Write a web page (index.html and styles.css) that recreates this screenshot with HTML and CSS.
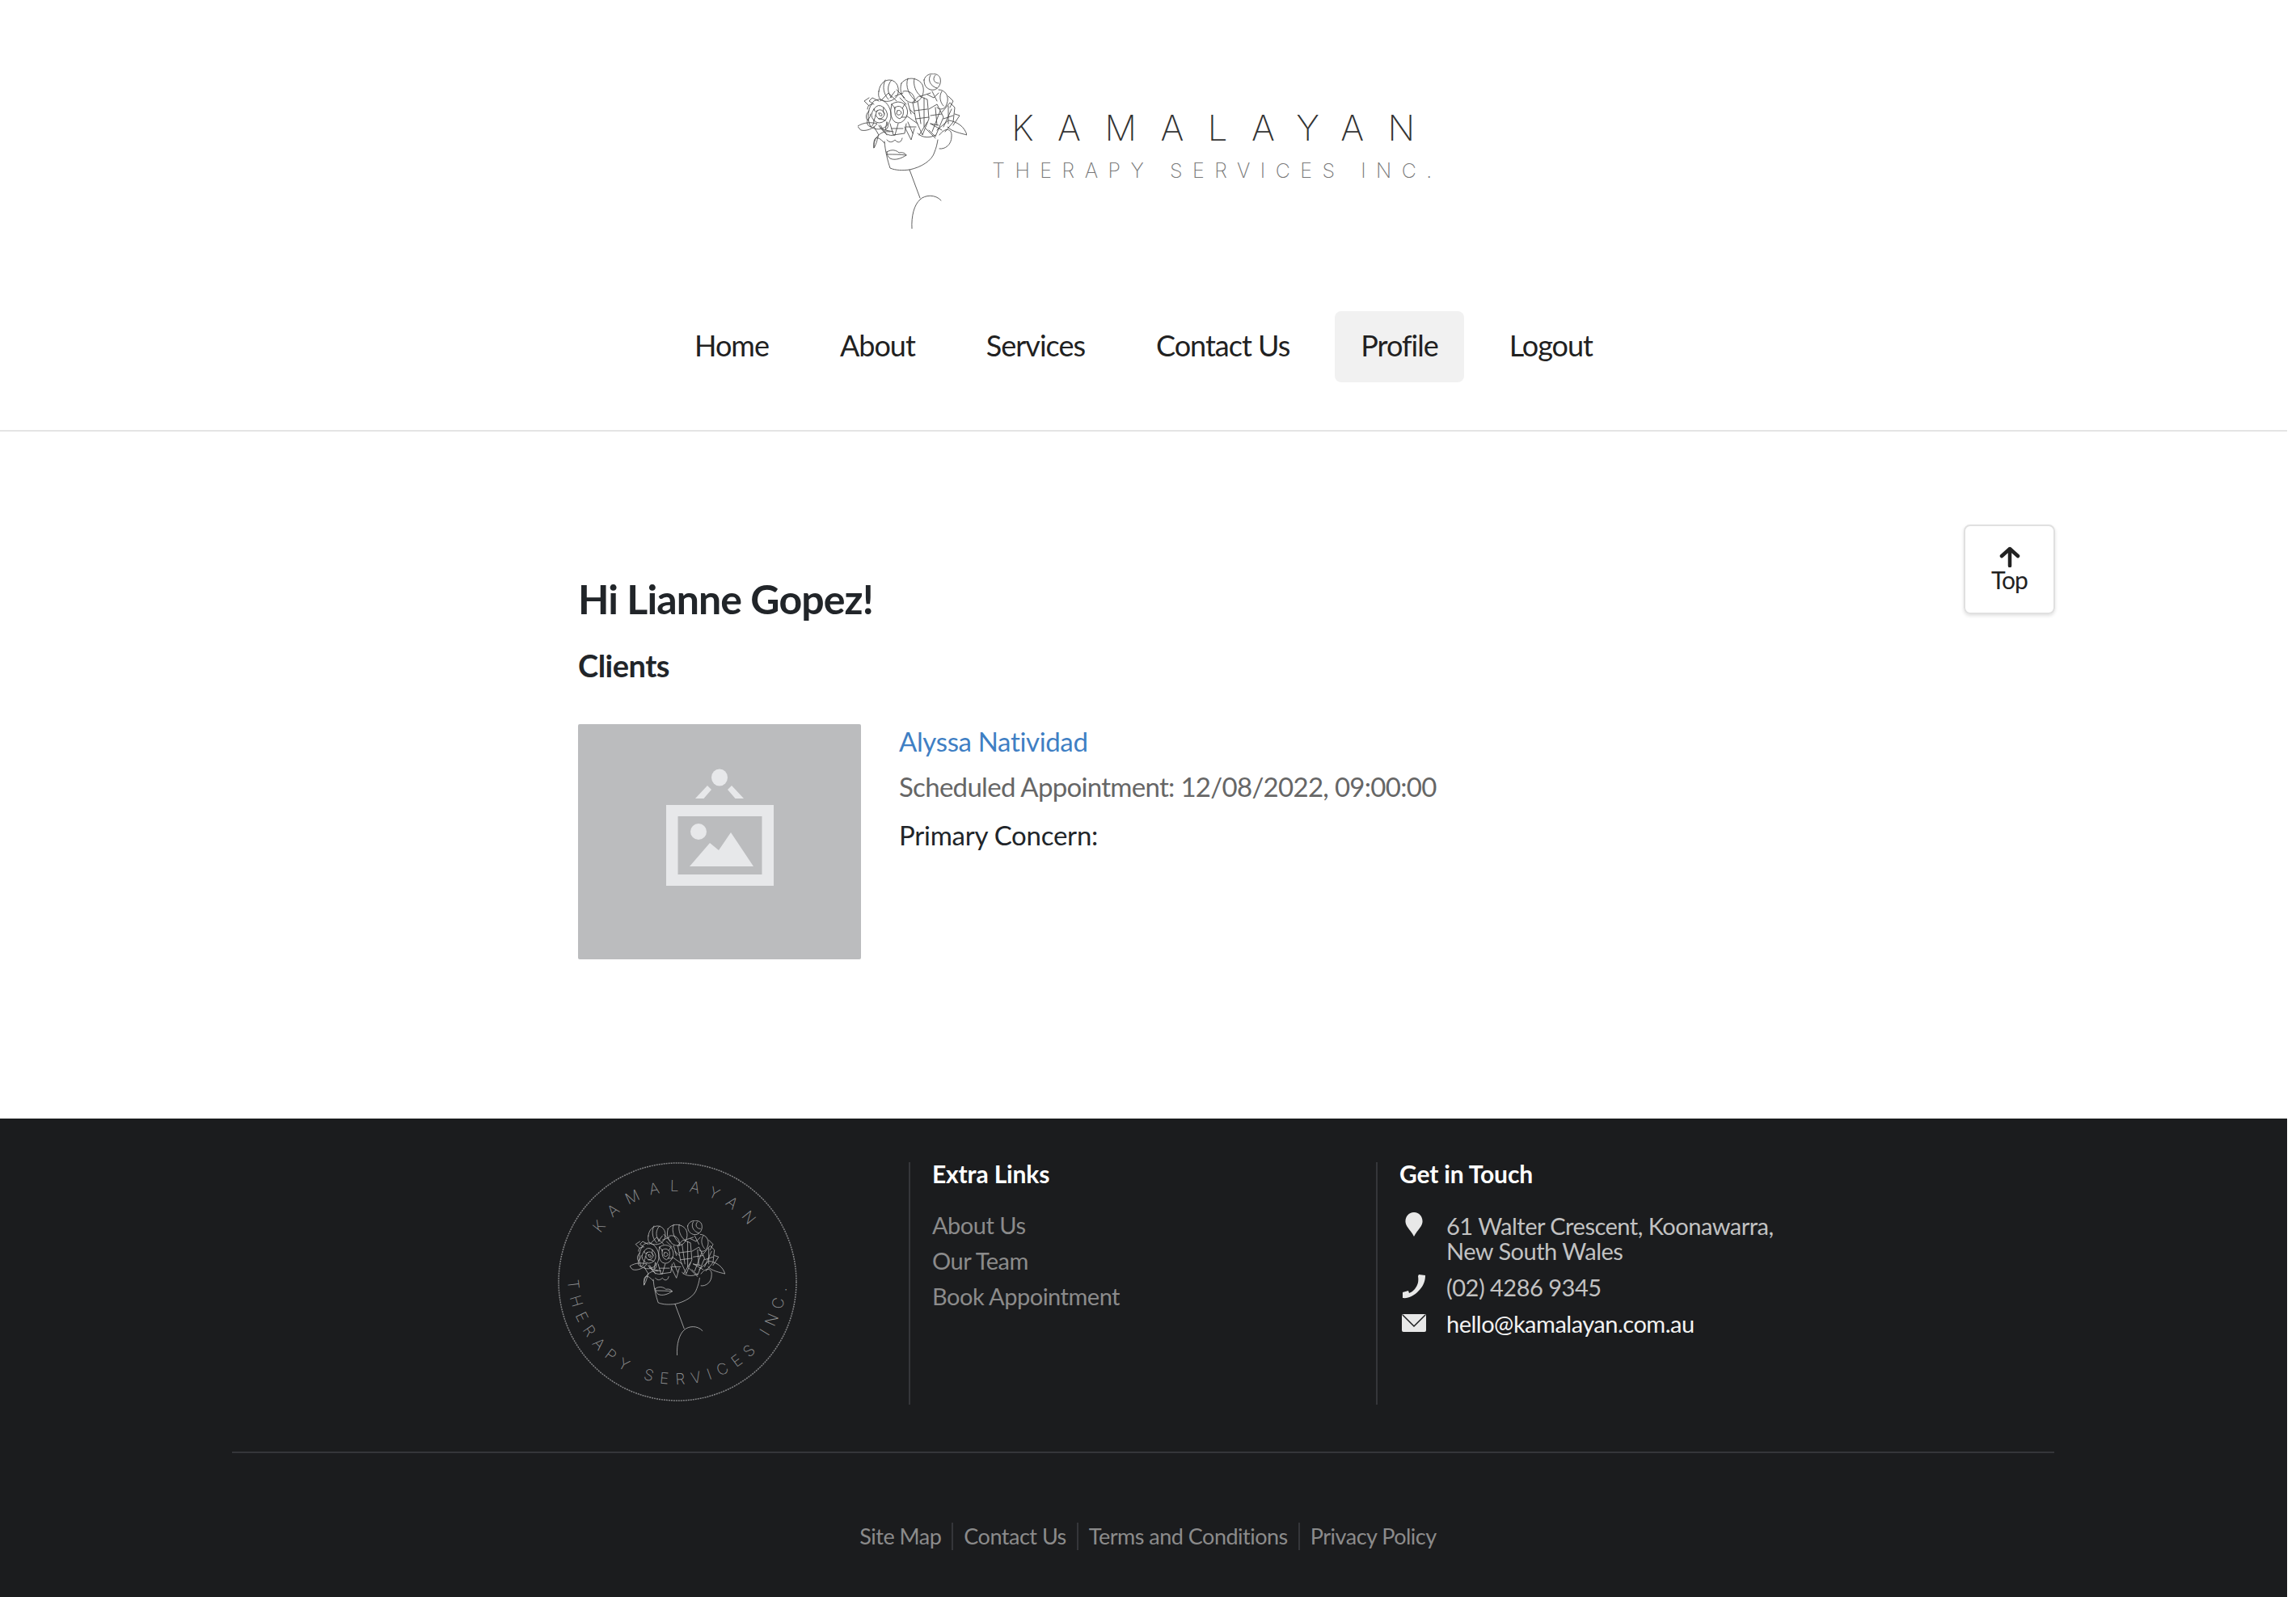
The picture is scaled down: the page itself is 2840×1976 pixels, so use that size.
FILE: index.html

```html
<!DOCTYPE html>
<html lang="en">
<head>
  <meta charset="UTF-8" />
  <meta name="viewport" content="width=device-width, initial-scale=1.0"/>
  <title>Kamalayan Therapy Services Inc.</title>
  <link rel="stylesheet" href="styles.css">
</head>
<body>
  <!-- line drawing of the head, shared by both logos -->
  <svg class="defs" aria-hidden="true">
    <symbol id="lady" viewBox="0 0 135 192">
      <g fill="none" stroke="currentColor" stroke-width=".85" stroke-linecap="round" stroke-linejoin="round">
        <path d="M64 119 L77 154 M67 192 C66 176 70 162 77 156 C83 150 96 149 103 157"/>
        <path d="M33 84 C34 96 37 108 40 117 C47 120 56 120 64 119 C78 116 92 108 95 97 C97 92 98 88 99 82"/>
        <path d="M101 76 C108 66 117 68 116 78 C116 88 108 94 101 93"/>
        <path d="M33 86 C22 74 19 80 20 92 C19 80 28 70 40 72"/>
        <path d="M36 97 C42 93 48 95 51 98 C56 97 59 99 60 101 C54 105 46 108 40 105 C37 103 36 100 36 97 Z M37 100 C44 100 52 100 60 101"/>
        <path d="M36 82 C40 87 44 84 46 82 C50 87 54 85 55 80"/>
        <path d="M0 65 C8 60 16 60 24 62 C20 68 10 72 4 70 Z M113 58 C124 60 132 66 135 76 C128 74 116 72 111 66"/>
        <path d="M26 22 C28 4 48 4 50 18 C52 30 42 36 32 34 C26 32 25 28 26 22 Z M34 8 C30 16 32 26 38 32 M42 8 C36 14 36 24 42 30"/>
        <path d="M54 12 C62 2 76 6 80 14 C84 24 78 36 68 36 C58 36 50 24 54 12 Z M62 6 C58 16 64 28 72 34 M70 6 C68 14 72 24 78 28 M56 22 C64 20 72 26 70 36"/>
        <path d="M82 8 C84 -2 100 -2 102 6 C104 14 98 22 90 20 C84 18 82 14 82 8 Z M90 2 C86 8 90 16 98 18 M96 2 C92 6 94 12 100 12"/>
        <path d="M100 20 C108 20 114 28 110 38 C108 44 102 46 98 42 M104 22 C100 28 102 36 106 40 M92 22 L98 34"/>
        <path d="M20 34 C12 42 11 56 16 66 C26 72 36 68 40 58 C44 46 36 32 26 32 Z M26 34 L18 30 L14 34 L20 38"/>
        <path d="M20 44 Q25 36 32 42 Q40 50 34 58 Q26 64 20 58 Q14 52 20 44 Z M24 46 Q30 42 33 50 Q32 56 26 56 Q20 52 24 46 Z M26 49 Q30 48 30 52 Q27 54 26 49 M20 44 Q22 50 24 46 M32 42 Q30 46 33 50 M34 58 Q30 56 26 56 M20 58 Q22 54 22 51"/>
        <path d="M14 46 Q8 52 12 58 Q16 54 16 50 M12 58 Q10 64 16 66 Q20 64 20 58 M18 38 Q12 38 12 44 M36 60 Q40 66 34 70 Q28 70 26 64"/>
        <path d="M42 38 Q50 32 58 38 Q64 46 60 54 Q54 64 46 60 Q38 54 42 38 Z M46 42 Q52 38 56 44 Q58 52 52 56 Q44 54 46 42 Z M49 46 Q53 44 54 49 Q51 53 48 50 Q48 48 49 46 Z M42 38 Q46 42 46 44 M58 38 Q56 42 55 43 M60 54 Q56 54 54 54"/>
        <path d="M40 62 L44 76 L58 74 L60 62 M50 62 L46 76 M36 60 L34 70 L44 72 M58 66 L66 82 L70 68 M42 68 L56 68 M28 64 L36 76"/>
        <path d="M68 36 L72 58 L80 76 L88 56 L86 32 L76 28 Z M74 34 L78 62 M82 30 L82 66 M70 46 L86 44 M72 56 L88 54"/>
        <path d="M88 44 L98 38 L106 54 L96 78 L88 70 M96 42 L98 64 M102 46 L92 72 M90 52 L104 50 M90 62 L100 64"/>
        <path d="M104 48 L114 36 L120 42 L118 60 L108 72 M112 40 L112 62 M116 44 L106 66 M120 50 L126 52 L118 64 M106 56 L118 52"/>
        <path d="M62 60 L68 74 M60 52 L74 62 M64 44 L70 50 M86 60 L76 76 M90 62 L104 70 M98 70 L112 58 M62 36 L66 50 M60 66 L72 66 M84 68 L96 80"/>
        <path d="M28 34 L38 24 L48 34 M52 30 L60 38 M28 66 C32 74 38 78 46 76 M74 74 C80 80 90 80 96 76 M46 28 L56 24 M78 28 L90 24 M48 20 L58 30"/>
        <path d="M14 40 L8 34 L14 30 M20 66 L26 76 C24 80 24 86 20 92 M40 30 L46 22 M86 26 L94 30 L100 24 M112 28 L118 34 L114 42"/>
      </g>
    </symbol>
  </svg>

  <header class="site-header">
    <a class="logo" href="#">
      <svg class="logo-lady"><use href="#lady"/></svg>
      <div class="logo-text">
        <div class="logo-name">KAMALAYAN</div>
        <div class="logo-sub">THERAPY SERVICES INC.</div>
      </div>
    </a>
    <nav class="main-nav">
      <a href="#">Home</a>
      <a href="#">About</a>
      <a href="#">Services</a>
      <a href="#">Contact Us</a>
      <a href="#" class="active">Profile</a>
      <a href="#">Logout</a>
    </nav>
  </header>

  <main class="content">
    <a href="#" class="top-btn">
      <svg width="26" height="26" viewBox="0 0 26 26"><path d="M13 24 V3 M3 12 L13 3 L23 12" fill="none" stroke="#222" stroke-width="4.5" stroke-linecap="round" stroke-linejoin="round"/></svg>
      <span>Top</span>
    </a>
    <h1>Hi Lianne Gopez!</h1>
    <h2>Clients</h2>
    <div class="client">
      <svg class="client-photo" viewBox="0 0 350 291">
        <rect width="350" height="291" fill="#bbbcbe"/>
        <ellipse cx="175" cy="66" rx="10" ry="10.500" fill="#e7e8ea"/>
        <path d="M160 76 L165 81 L155.500 92 H145 Z M190 76 L185 81 L194.500 92 H205 Z" fill="#e7e8ea"/>
        <path fill-rule="evenodd" d="M109 100 H242 V200 H109 Z M123.500 114 V186 H227.500 V114 Z" fill="#e7e8ea"/>
        <ellipse cx="149" cy="133" rx="10" ry="10" fill="#e7e8ea"/>
        <path d="M138 176 L163 147 L174 156 L189 134 L217 176 Z" fill="#e7e8ea"/>
      </svg>
      <div class="client-info">
        <a href="#" class="client-name">Alyssa Natividad</a>
        <p class="client-appt">Scheduled Appointment: 12/08/2022, 09:00:00</p>
        <p class="client-concern">Primary Concern:</p>
      </div>
    </div>
  </main>

  <footer class="site-footer">
    <div class="footer-cols">
      <div class="footer-logo">
        <svg class="badge" viewBox="0 0 296 296">
          <defs>
            <path id="arcTop" d="M36 148 A112 112 0 0 1 260 148"/>
            <path id="arcBottom" d="M12 139 A136 136 0 0 0 284 139"/>
          </defs>
          <circle cx="148" cy="148" r="147" fill="none" stroke="#808183" stroke-width="1.5" stroke-dasharray="2 1"/>
          <text class="badge-text badge-top"><textPath href="#arcTop" startOffset="50%" text-anchor="middle">KAMALAYAN</textPath></text>
          <text class="badge-text badge-bottom"><textPath href="#arcBottom" startOffset="50%" text-anchor="middle">THERAPY SERVICES INC.</textPath></text>
          <svg x="89" y="72" width="118" height="167" class="badge-lady"><use href="#lady"/></svg>
        </svg>
      </div>
      <div class="footer-col links-col">
        <h3>Extra Links</h3>
        <a href="#">About Us</a>
        <a href="#">Our Team</a>
        <a href="#">Book Appointment</a>
      </div>
      <div class="footer-col contact-col">
        <h3>Get in Touch</h3>
        <div class="contact-row address">
          <svg class="contact-icon" viewBox="0 0 30 30"><path d="M15 0 C22 0 26 6 25.500 12 C25 18 19 22 15 30 C11 22 5 18 4.500 12 C4 6 8 0 15 0 Z" fill="#e8e8e8"/></svg>
          <span>61 Walter Crescent, Koonawarra,<br>New South Wales</span>
        </div>
        <div class="contact-row">
          <svg class="contact-icon" viewBox="0 0 30 30"><path d="M29 1 L21 0 L20 2 C21 8 20 13 16 18 C14 20 12 22 9 23 L8 20 L1 22 L1 29 C8 30 15 26 20 21 C26 15 29 9 29 1 Z" fill="#e8e8e8"/></svg>
          <span>(02) 4286 9345</span>
        </div>
        <div class="contact-row email">
          <svg class="contact-icon" viewBox="0 0 30 30"><rect y="4" width="30" height="22" rx="2" fill="#e8e8e8"/><path d="M1 5 L15 19 L29 5" fill="none" stroke="#1b1c1e" stroke-width="1.500"/></svg>
          <a href="#">hello@kamalayan.com.au</a>
        </div>
      </div>
    </div>
    <div class="footer-bottom">
      <a href="#">Site Map</a>
      <a href="#">Contact Us</a>
      <a href="#">Terms and Conditions</a>
      <a href="#">Privacy Policy</a>
    </div>
  </footer>
</body>
</html>
```

FILE: styles.css

```css
* {
  box-sizing: border-box;
}
html, body {
  margin: 0;
  height: 1976px;
  overflow: hidden;
}
body {
  font-family: Lato, "Open Sans", sans-serif;
  background: #fff;
  color: #212529;
  padding-right: 11px;
}
a {
  text-decoration: none;
  color: inherit;
}
.defs {
  position: absolute;
  width: 0;
  height: 0;
}

/* header */
.site-header {
  height: 534px;
  border-bottom: 2px solid #e4e4e4;
  padding-top: 91px;
}
.logo {
  display: flex;
  justify-content: center;
  align-items: flex-start;
  height: 192px;
  color: #444;
  padding-left: 17px;
}
.logo-lady {
  width: 135px;
  height: 192px;
}
.logo-text {
  width: 560px;
  margin-left: 30px;
  padding-top: 42px;
  font-family: Inter, sans-serif;
  font-weight: 200;
  text-align: center;
  white-space: nowrap;
}
.logo-name {
  font-size: 44px;
  letter-spacing: 29.500px;
  line-height: 50px;
  padding-left: 20px;
  color: #333;
}
.logo-sub {
  font-size: 25px;
  letter-spacing: 12.500px;
  line-height: 30px;
  margin-top: 13px;
  color: #777;
}
.main-nav {
  display: flex;
  justify-content: center;
  gap: 24px;
  margin-top: 102px;
}
.main-nav a {
  padding: 0 32px;
  height: 88px;
  line-height: 84px;
  font-size: 36px;
  letter-spacing: -1px;
  border-radius: 8px;
  color: #212121;
}
.main-nav a.active {
  background: #f1f1f1;
}

/* content */
.content {
  position: relative;
  height: 850px;
  padding: 177px 0 0 715px;
}
.top-btn {
  position: absolute;
  top: 115px;
  left: 2429px;
  width: 113px;
  height: 111px;
  border: 2px solid #e0e0e0;
  border-radius: 8px;
  box-shadow: 0 2px 4px rgba(0, 0, 0, .12);
  display: flex;
  flex-direction: column;
  align-items: center;
  padding-top: 25px;
  font-size: 30px;
  line-height: 30px;
  letter-spacing: -1px;
  color: #222;
}
.top-btn svg {
  display: block;
}
h1 {
  margin: 0;
  font-size: 50px;
  line-height: 60px;
  font-weight: 700;
  letter-spacing: -.9px;
  color: #212529;
}
h2 {
  margin: 30px 0 0;
  font-size: 38px;
  line-height: 44px;
  font-weight: 700;
  letter-spacing: -.5px;
  color: #212529;
}
.client {
  display: flex;
  gap: 47px;
  margin-top: 51px;
}
.client-photo {
  width: 350px;
  height: 291px;
  flex: none;
  border-radius: 2px;
}
.client-info {
  font-size: 33px;
  line-height: 44px;
  letter-spacing: -.7px;
  margin-top: -1px;
}
.client-info p {
  margin: 0;
}
.client-name {
  display: block;
  letter-spacing: -.35px;
  color: #3f7fc4;
}
.client-info .client-appt {
  margin-top: 12px;
  color: #666;
}
.client-info .client-concern {
  margin-top: 16px;
  letter-spacing: -.25px;
  color: #212529;
}

/* footer */
.site-footer {
  height: 592px;
  background: #1b1c1e;
  padding: 54px 0 0 287px;
}
.footer-cols {
  display: flex;
  height: 300px;
  padding-left: 403px;
}
.footer-logo {
  width: 434px;
  flex: none;
}
.badge {
  display: block;
  width: 296px;
  height: 296px;
  overflow: visible;
}
.badge-text {
  font-family: Inter, sans-serif;
  font-weight: 200;
  font-size: 19px;
  fill: #8f9092;
}
.badge-top {
  letter-spacing: 12.500px;
}
.badge-bottom {
  letter-spacing: 9px;
}
.badge-lady {
  color: #c4c4c4;
}
.footer-col {
  border-left: 2px solid #35363a;
  padding-left: 27px;
  font-size: 29px;
  letter-spacing: -.5px;
}
.links-col {
  width: 578px;
  flex: none;
}
.contact-col {
  flex: 1;
}
.footer-col h3 {
  margin: -4px 0 24px;
  font-size: 30px;
  line-height: 36px;
  font-weight: 700;
  letter-spacing: -.15px;
  color: #fff;
}
.links-col a {
  display: block;
  line-height: 44px;
  color: #8b8b8b;
}
.contact-row {
  display: flex;
  gap: 25px;
  line-height: 31px;
  margin-bottom: 14px;
  color: #c2c2c2;
}
.contact-row.address {
  margin-top: 31px;
}
.contact-icon {
  width: 30px;
  height: 30px;
  flex: none;
  margin-left: 3px;
}
.contact-row.address .contact-icon {
  margin-top: -1px;
}
.contact-row.email {
  color: #f2f2f2;
  margin-top: 8px;
}
.footer-bottom {
  width: 2254px;
  border-top: 2px solid #35363a;
  margin-top: 58px;
  padding: 86px 0 0 12px;
  display: flex;
  justify-content: center;
  font-size: 27px;
  line-height: 34px;
  letter-spacing: -.5px;
  color: #8b8b8b;
}
.footer-bottom a {
  padding: 0 13px;
  border-left: 2px solid #35363a;
}
.footer-bottom a:first-child {
  border-left: none;
}
```
